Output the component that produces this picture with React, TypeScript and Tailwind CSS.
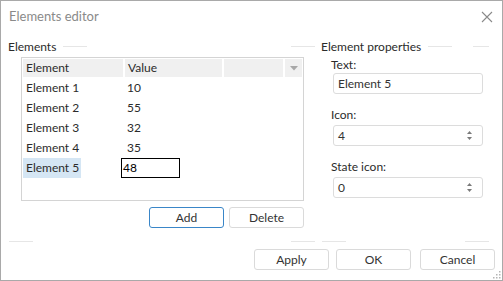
import React from "react";

const font = { fontFamily: 'Lato, "Noto Sans", sans-serif' };

function Line({ w }: { w: string }) {
  return <div className={`h-px bg-[#e6e6e6] ${w}`} />;
}

function Spinner() {
  return (
    <svg width="7" height="13" viewBox="0 0 7 13" className="text-[#7a7a7a]" aria-hidden="true">
      <path d="M3.5 2 L6 5 L1 5 Z" fill="currentColor" />
      <path d="M1 8 L6 8 L3.5 11 Z" fill="currentColor" />
    </svg>
  );
}

function Field({ value, spin }: { value: string; spin?: boolean }) {
  return (
    <div className="ml-[12px] flex h-[21px] w-[150px] shrink-0 items-center justify-between rounded-[3px] border border-[#dcdcdc] bg-white pl-[4px] pr-[9px] text-[#333]">
      <span>{value}</span>
      {spin && <Spinner />}
    </div>
  );
}

function Btn({ label, primary, className = "" }: { label: string; primary?: boolean; className?: string }) {
  return (
    <button
      className={`flex h-[21px] w-[75px] items-center justify-center rounded-[3px] border bg-white text-[#333] ${
        primary ? "border-[#3a86c8]" : "border-[#dadada]"
      } ${className}`}
    >
      {label}
    </button>
  );
}

const rows = [
  { name: "Element 1", value: "10" },
  { name: "Element 2", value: "55" },
  { name: "Element 3", value: "32" },
  { name: "Element 4", value: "35" },
  { name: "Element 5", value: "48" },
];

export default function App() {
  return (
    <div style={font} className="relative flex h-[281px] w-[503px] flex-col border border-[#a9a9a9] bg-white text-[12px] text-[#2b2b2b]">
      {/* title bar */}
      <div className="flex h-[31px] shrink-0 items-center justify-between pl-[8px] pr-[9px]">
        <span className="text-[13px] text-[#8a8a8a]">Elements editor</span>
        <svg width="12" height="12" viewBox="0 0 12 12" aria-hidden="true">
          <path d="M1 1 L11 11 M11 1 L1 11" stroke="#8a8a8a" strokeWidth="1.1" />
        </svg>
      </div>

      <div className="flex">
        {/* left group */}
        <div className="flex w-[314px] flex-col pl-[7px]">
          <div className="mt-[5px] flex h-[19px] items-center">
            <span>Elements</span>
            <div className="ml-[7px]">
              <Line w="w-[24px]" />
            </div>
            <div className="flex-1" />
            <Line w="w-[24px]" />
          </div>

          <div className="ml-[13px] mt-[1px] flex h-[144px] w-[283px] flex-col border border-[#d4d4d4] p-px">
            <div className="flex h-[18px] gap-[2px]">
              <div className="flex w-[100px] items-center bg-[#f0f0f0] pl-[3px]">Element</div>
              <div className="flex w-[97px] items-center bg-[#f0f0f0] pl-[3px]">Value</div>
              <div className="w-[59px] bg-[#f0f0f0]" />
              <div className="flex w-[17px] items-center justify-center bg-[#f0f0f0]">
                <svg width="8" height="5" viewBox="0 0 8 5" aria-hidden="true">
                  <path d="M0 0 L8 0 L4 4.5 Z" fill="#a8a8a8" />
                </svg>
              </div>
            </div>
            <div className="mt-px flex flex-col">
              {rows.map((r, i) => {
                const sel = i === rows.length - 1;
                return (
                  <div key={r.name} className="flex h-[20px] items-center whitespace-nowrap">
                    <div className="w-[98px]">
                      <div className={`flex h-[20px] w-[58px] items-center pl-[3px] ${sel ? "bg-[#d5e6f4]" : ""}`}>{r.name}</div>
                    </div>
                    {sel ? (
                      <div className="flex h-[20px] w-[59px] items-center border border-black pl-[1px] text-black">{r.value}</div>
                    ) : (
                      <div className="pl-[6px]">{r.value}</div>
                    )}
                  </div>
                );
              })}
            </div>
          </div>

          <div className="ml-[141px] mt-[6px] flex gap-[5px]">
            <Btn label="Add" primary />
            <Btn label="Delete" />
          </div>
        </div>

        {/* right group */}
        <div className="flex w-[174px] flex-col pl-[6px]">
          <div className="mt-[5px] flex h-[19px] items-center">
            <span>Element properties</span>
            <div className="ml-[7px]">
              <Line w="w-[24px]" />
            </div>
            <div className="flex-1" />
            <Line w="w-[16px]" />
          </div>
          <div className="ml-[10px] flex h-[17px] items-center">Text:</div>
          <Field value="Element 5" />
          <div className="ml-[10px] mt-[11px] flex h-[20px] items-center">Icon:</div>
          <Field value="4" spin />
          <div className="ml-[10px] mt-[11px] flex h-[20px] items-center">State icon:</div>
          <Field value="0" spin />
        </div>
      </div>

      {/* bottom separators */}
      <div className="mt-[13px] flex">
        <div className="flex w-[314px] pl-[8px]">
          <Line w="w-[24px]" />
          <div className="flex-1" />
          <Line w="w-[24px]" />
        </div>
        <div className="flex w-[174px] pl-[7px]">
          <Line w="w-[24px]" />
          <div className="flex-1" />
          <Line w="w-[24px]" />
        </div>
      </div>

      <div className="mt-[7px] flex justify-end gap-[7px] pr-[7px]">
        <Btn label="Apply" />
        <Btn label="OK" className="mr-[2px]" />
        <Btn label="Cancel" />
      </div>

      {/* resize grip */}
      <svg width="9" height="9" viewBox="0 0 9 9" className="absolute bottom-[1px] right-[1px]" aria-hidden="true">
        {[
          [7, 1],
          [4, 4],
          [7, 4],
          [1, 7],
          [4, 7],
          [7, 7],
        ].map(([x, y]) => (
          <rect key={`${x}-${y}`} x={x} y={y} width="1.5" height="1.5" fill="#b5b5b5" />
        ))}
      </svg>
    </div>
  );
}
